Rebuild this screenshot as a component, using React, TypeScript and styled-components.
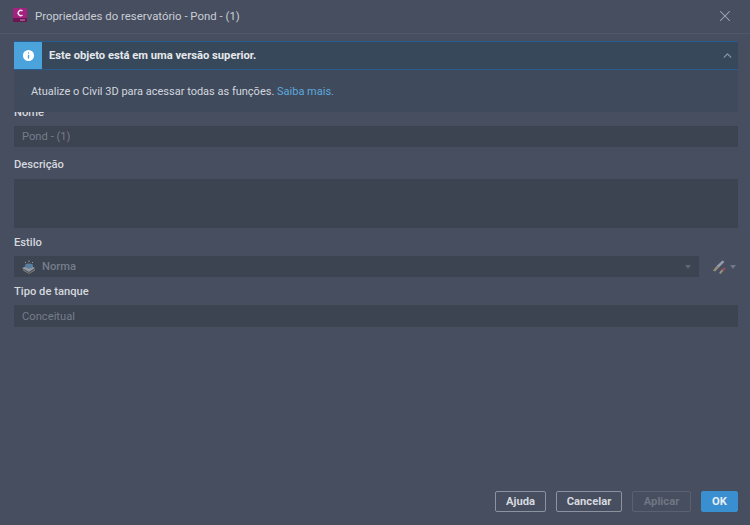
import React from "react";
import styled, { createGlobalStyle } from "styled-components";
import { X, ChevronUp, Info } from "lucide-react";

const GlobalStyle = createGlobalStyle`
  html, body {
    margin: 0;
    padding: 0;
    background: #474e5f;
  }
  * {
    box-sizing: border-box;
  }
`;

const Dialog = styled.div`
  width: 750px;
  height: 525px;
  display: flex;
  flex-direction: column;
  position: relative;
  overflow: hidden;
  background: #474e5f;
  font-family: Roboto, "Noto Sans", sans-serif;
  font-size: 11.3px;
  color: #d8dce3;
`;

const TitleBar = styled.header`
  height: 34px;
  flex: none;
  display: flex;
  align-items: center;
  padding: 0 16px 2px 13px;
  border-bottom: 1px solid #515868;
`;

const Title = styled.span`
  margin-left: 8px;
  flex: 1;
  font-size: 11.4px;
  color: #c9cdd5;
`;

const CloseIcon = styled(X)`
  color: #a2a8b4;
`;

const Banner = styled.section`
  position: absolute;
  left: 14px;
  top: 41px;
  width: 724px;
  height: 71px;
  background: #3f4a5c;
  z-index: 1;
`;

const BannerHead = styled.div`
  height: 29px;
  display: flex;
  align-items: center;
  background: #37485b;
  border-top: 1px solid #275d8e;
  border-bottom: 1px solid #275d8e;
  padding-right: 4px;
`;

const BannerBadge = styled.div`
  width: 28px;
  height: 27px;
  display: flex;
  align-items: center;
  justify-content: center;
  background: #4ba3dc;
`;

const BannerTitle = styled.strong`
  flex: 1;
  margin-left: 7px;
  font-size: 11.2px;
  font-weight: 700;
  color: #e6e8ec;
`;

const BannerChevron = styled(ChevronUp)`
  color: #8a93a3;
`;

const BannerText = styled.p`
  margin: 14px 0 0 17px;
  font-size: 11px;
  line-height: 15px;
  color: #d3d7de;
`;

const BannerLink = styled.span`
  color: #5ea9dd;
`;

const Content = styled.main`
  flex: 1;
  padding: 70px 12px 0 14px;
  display: flex;
  flex-direction: column;
`;

const Label = styled.label<{ $top: number; $gap: number }>`
  display: block;
  height: 16px;
  line-height: 18px;
  margin-top: ${(p) => p.$top}px;
  margin-bottom: ${(p) => p.$gap}px;
  font-size: 11.2px;
  font-weight: 500;
  color: #d5d8de;
`;

const Field = styled.div<{ $h?: number }>`
  height: ${(p) => p.$h ?? 21}px;
  display: flex;
  align-items: center;
  padding: 0 8px;
  background: #3c4351;
  font-size: 11.2px;
  color: #767d8b;
`;

const SelectRow = styled.div`
  display: flex;
  align-items: center;
`;

const Select = styled(Field)`
  flex: 1;
  gap: 5px;
  padding: 0 8px 0 7px;
`;

const SelectText = styled.span`
  flex: 1;
  font-weight: 500;
`;

const Caret = styled.span<{ $color: string }>`
  width: 0;
  height: 0;
  border-left: 3px solid transparent;
  border-right: 3px solid transparent;
  border-top: 4px solid ${(p) => p.$color};
`;

const StyleTool = styled.div`
  width: 39px;
  display: flex;
  align-items: center;
  justify-content: flex-end;
  gap: 2px;
  padding-right: 2px;
`;

const Footer = styled.footer`
  flex: none;
  display: flex;
  justify-content: flex-end;
  gap: 10px;
  padding: 0 12px 13px 0;
`;

const Button = styled.button<{ $kind?: "primary" | "disabled"; $w: number }>`
  height: 21px;
  padding: 0;
  width: ${(p) => p.$w}px;
  border-radius: 2px;
  font-family: inherit;
  font-size: 11.2px;
  font-weight: 700;
  background: ${(p) => (p.$kind === "primary" ? "#3a8fd0" : "transparent")};
  color: ${(p) =>
    p.$kind === "primary"
      ? "#e8eef4"
      : p.$kind === "disabled"
        ? "#6f7684"
        : "#d6d9df"};
  border: 1px solid
    ${(p) =>
      p.$kind === "primary"
        ? "#3a8fd0"
        : p.$kind === "disabled"
          ? "#5a6170"
          : "#8b92a0"};
`;

const AppIcon = () => (
  <svg width="14" height="15" viewBox="0 0 14 15">
    <rect x="0" y="0" width="14" height="14" rx="1" fill="#a3227f" />
    <rect x="0" y="10" width="14" height="4" fill="#6c1554" />
    <path d="M9.5 3 A2.6 2.6 0 1 0 9.5 7" fill="none" stroke="#f4e2ee" strokeWidth="1.5" />
    <path d="M7 12 H12" stroke="#c98cb8" strokeWidth="1" />
  </svg>
);

const StyleIcon = () => (
  <svg width="16" height="14" viewBox="0 0 16 14" opacity="0.8">
    <path d="M1 8 L8 5 L14 8 L8 12 Z" fill="#a9aeb6" />
    <path d="M2 9 L8 13 L14 9 L14 10.5 L8 14 L2 10.5 Z" fill="#8f8a7c" />
    <ellipse cx="8" cy="6" rx="4" ry="2.4" fill="#5d8fb5" />
    <path d="M4 2 L5 3 M8 0.5 L8 2 M12 2 L11 3" stroke="#aab0ba" strokeWidth="1" />
  </svg>
);

const BrushIcon = () => (
  <svg width="16" height="16" viewBox="0 0 16 16" opacity="0.85">
    <path d="M1 11.5 L4.5 7 L7 8.5 L3 12.5 Z" fill="#a59a7c" />
    <path d="M4.5 7 L10.5 1.5 L12.5 2.8 L7 8.5 Z" fill="#a3a9b5" />
    <path d="M7 14 L9.5 10.5 L11.5 12 L8.5 15 Z" fill="#a59a7c" />
    <path d="M9.5 10.5 L12 8.5 L14 9.5 L11.5 12 Z" fill="#a5545a" />
  </svg>
);

export default function App() {
  return (
    <Dialog>
      <GlobalStyle />
      <TitleBar>
        <AppIcon />
        <Title>Propriedades do reservatório - Pond - (1)</Title>
        <CloseIcon size={18} strokeWidth={1.4} />
      </TitleBar>
      <Banner>
        <BannerHead>
          <BannerBadge>
            <Info size={15} color="#4ba3dc" fill="#ffffff" strokeWidth={2.2} />
          </BannerBadge>
          <BannerTitle>Este objeto está em uma versão superior.</BannerTitle>
          <BannerChevron size={13} strokeWidth={2.6} />
        </BannerHead>
        <BannerText>
          Atualize o Civil 3D para acessar todas as funções.{" "}
          <BannerLink>Saiba mais.</BannerLink>
        </BannerText>
      </Banner>
      <Content>
        <Label $top={0} $gap={6}>Nome</Label>
        <Field>Pond - (1)</Field>
        <Label $top={9} $gap={7}>Descrição</Label>
        <Field $h={49} />
        <Label $top={6} $gap={6}>Estilo</Label>
        <SelectRow>
          <Select>
            <StyleIcon />
            <SelectText>Norma</SelectText>
            <Caret $color="#5f6675" />
          </Select>
          <StyleTool>
            <BrushIcon />
            <Caret $color="#707786" />
          </StyleTool>
        </SelectRow>
        <Label $top={6} $gap={6}>Tipo de tanque</Label>
        <Field $h={22}>Conceitual</Field>
      </Content>
      <Footer>
        <Button $w={51}>Ajuda</Button>
        <Button $w={66}>Cancelar</Button>
        <Button $w={59} $kind="disabled">Aplicar</Button>
        <Button $w={37} $kind="primary">OK</Button>
      </Footer>
    </Dialog>
  );
}
